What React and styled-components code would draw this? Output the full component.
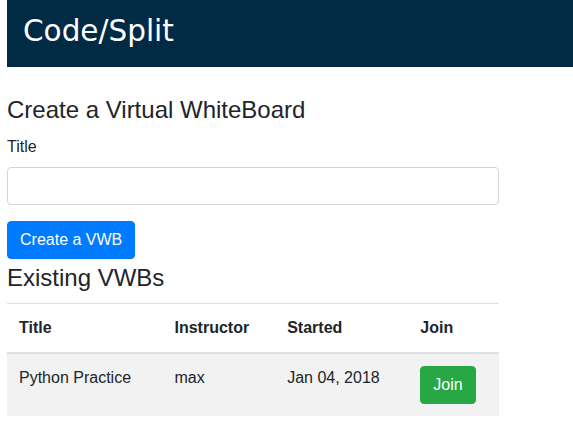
import React from "react";
import styled, { createGlobalStyle } from "styled-components";

const Global = createGlobalStyle`
  html, body { margin: 0; padding: 0; background: #fff; }
  body {
    font-family: "Liberation Sans", Arial, sans-serif;
    font-size: 16px;
    line-height: 1.5;
    color: #212529;
  }
  * { box-sizing: border-box; }
`;

const Page = styled.div`
  padding-left: 7px;
`;

const Header = styled.header`
  height: 67px;
  background: #012a45;
  color: #fff;
  padding: 0 16px 4px;
  font-family: "DejaVu Sans", sans-serif;
  font-size: 29.5px;
  line-height: 63px;
`;

const Main = styled.main`
  width: 492px;
  padding-top: 30px;
`;

const Heading = styled.h3`
  margin: ${(p) => (p.$tight ? "6px 0 12px" : "0 0 12px")};
  font-size: 24px;
  font-weight: 400;
  line-height: 26px;
`;

const Label = styled.label`
  display: block;
  margin-bottom: 8px;
`;

const Input = styled.input`
  display: block;
  width: 100%;
  height: 38px;
  padding: 6px 12px;
  border: 1px solid #ced4da;
  border-radius: 4px;
  font: inherit;
  margin-bottom: 16px;
`;

const Button = styled.button`
  display: inline-block;
  height: 38px;
  padding: 6px 12px;
  border: 1px solid ${(p) => p.$color};
  background: ${(p) => p.$color};
  color: #fff;
  border-radius: 4px;
  font-family: inherit;
  font-size: 16px;
  line-height: 24px;
  vertical-align: top;
`;

const Table = styled.table`
  width: 100%;
  border-collapse: collapse;
`;

const Th = styled.th`
  text-align: left;
  font-weight: 700;
  padding: 12px;
  border-top: 1px solid #dee2e6;
  border-bottom: 2px solid #dee2e6;
  vertical-align: bottom;
`;

const Row = styled.tr`
  background: #f2f2f2;
`;

const Td = styled.td`
  padding: 12px;
  vertical-align: top;
`;

const rows = [
  { title: "Python Practice", instructor: "max", started: "Jan 04, 2018" },
];

export default function App() {
  return (
    <>
      <Global />
      <Page>
        <Header>Code/Split</Header>
        <Main>
          <Heading>Create a Virtual WhiteBoard</Heading>
          <Label htmlFor="title">Title</Label>
          <Input id="title" type="text" />
          <Button $color="#007bff">Create a VWB</Button>
          <Heading $tight>Existing VWBs</Heading>
          <Table>
            <thead>
              <tr>
                <Th>Title</Th>
                <Th>Instructor</Th>
                <Th>Started</Th>
                <Th>Join</Th>
              </tr>
            </thead>
            <tbody>
              {rows.map((r) => (
                <Row key={r.title}>
                  <Td>{r.title}</Td>
                  <Td>{r.instructor}</Td>
                  <Td>{r.started}</Td>
                  <Td>
                    <Button $color="#28a745">Join</Button>
                  </Td>
                </Row>
              ))}
            </tbody>
          </Table>
        </Main>
      </Page>
    </>
  );
}
